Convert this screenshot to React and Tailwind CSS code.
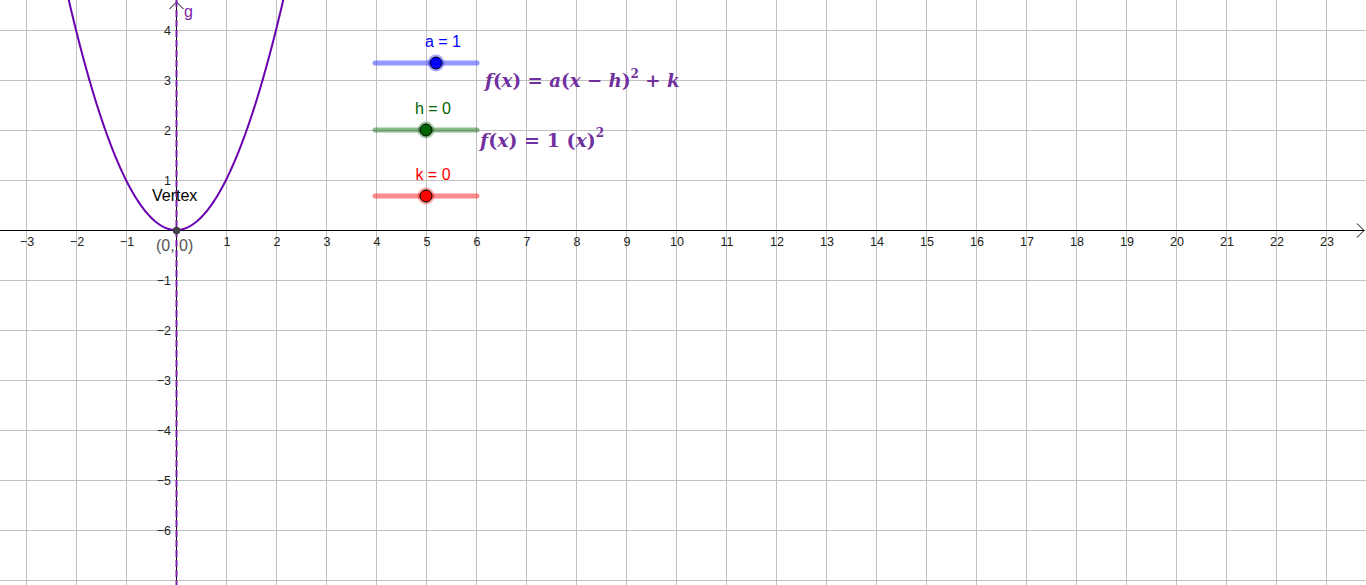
import React from 'react';

const W = 1366;
const H = 585;
const OX = 176;
const OY = 230;
const U = 50;

const px = (x) => OX + x * U;
const py = (y) => OY - y * U;

const parabola = () => {
  const pts = [];
  for (let x = -2.3; x <= 2.3; x += 0.02) {
    pts.push(`${px(x).toFixed(2)},${py(x * x).toFixed(2)}`);
  }
  return 'M' + pts.join(' L');
};

const minus = (n) => (n < 0 ? '\u2212' + Math.abs(n) : String(n));

const Slider = ({ y, pos, line, fill, halo, label, labelColor, labelX }) => (
  <g>
    <line x1={375} y1={y} x2={477} y2={y} stroke={line} strokeWidth={5} strokeLinecap="round" />
    <circle cx={pos} cy={y} r={8.5} fill={halo} />
    <circle cx={pos} cy={y} r={6} fill={fill} stroke="#000" strokeWidth={1} />
    <text x={labelX} y={y - 16} fill={labelColor} fontSize={16} textAnchor="middle">{label}</text>
  </g>
);

export default function App() {
  const xs = [];
  for (let n = -3; n <= 23; n++) xs.push(n);
  const ys = [];
  for (let n = 4; n >= -7; n--) ys.push(n);

  return (
    <div className="w-[1366px] h-[585px] bg-white overflow-hidden font-['Liberation_Sans',Arial,sans-serif]">
      <svg width={W} height={H} viewBox={`0 0 ${W} ${H}`} className="block">
        {/* grid */}
        {xs.map((n) => (
          <line key={'gx' + n} x1={px(n) + 0.5} y1={0} x2={px(n) + 0.5} y2={H} stroke="#c0c0c0" strokeWidth={1} />
        ))}
        {ys.map((n) => (
          <line key={'gy' + n} x1={0} y1={py(n) + 0.5} x2={W} y2={py(n) + 0.5} stroke="#c0c0c0" strokeWidth={1} />
        ))}

        {/* axes */}
        <line x1={0} y1={OY + 0.5} x2={1364} y2={OY + 0.5} stroke="#000" strokeWidth={1} />
        <path d={`M1357 ${OY - 6.5} L1364 ${OY + 0.5} L1357 ${OY + 7.5}`} fill="none" stroke="#000" strokeWidth={1} />
        <line x1={OX + 0.5} y1={2} x2={OX + 0.5} y2={H} stroke="#000" strokeWidth={1} />
        <path d={`M${OX - 6.5} 9 L${OX + 0.5} 2 L${OX + 7.5} 9`} fill="none" stroke="#000" strokeWidth={1} />

        {/* tick labels */}
        {xs.filter((n) => n !== 0).map((n) => (
          <text key={'lx' + n} x={px(n) + 1} y={OY + 16} fontSize={12.5} fill="#222" textAnchor="middle">{minus(n)}</text>
        ))}
        {ys.filter((n) => n !== 0 && n > -7).map((n) => (
          <text key={'ly' + n} x={OX - 5} y={py(n) + 5} fontSize={12.5} fill="#222" textAnchor="end">{minus(n)}</text>
        ))}

        {/* line g : x = 0 */}
        <line x1={OX + 0.5} y1={0} x2={OX + 0.5} y2={H} stroke="#7a1fa8" strokeWidth={2} strokeDasharray="7 3" />
        <text x={184} y={17} fontSize={16} fill="#7a1fa8">g</text>

        {/* parabola */}
        <path d={parabola()} fill="none" stroke="#6a00b0" strokeWidth={2} strokeLinejoin="round" />

        {/* vertex */}
        <circle cx={OX + 0.5} cy={OY + 0.5} r={3.5} fill="#444" stroke="#222" strokeWidth={0.5} />
        <text x={152} y={201} fontSize={16} fill="#000">Vertex</text>
        <text x={156} y={251} fontSize={16} fill="#555">(0, 0)</text>

        {/* sliders */}
        <Slider y={63} pos={436} line="rgba(64,64,255,0.55)" fill="#0000ff" halo="rgba(64,64,255,0.45)" label="a = 1" labelColor="#0000ff" labelX={443} />
        <Slider y={130} pos={426} line="rgba(0,100,0,0.45)" fill="#006400" halo="rgba(0,100,0,0.35)" label="h = 0" labelColor="#006400" labelX={433} />
        <Slider y={196} pos={426} line="rgba(255,0,0,0.45)" fill="#ff0000" halo="rgba(255,0,0,0.35)" label="k = 0" labelColor="#ff0000" labelX={433} />

        {/* formulas */}
        <text x={485} y={87} fontSize={18.3} fill="#7030a0" fontWeight="bold" className="font-['DejaVu_Serif','Liberation_Serif',serif]">
          <tspan fontStyle="italic">f</tspan>
          <tspan>(</tspan>
          <tspan fontStyle="italic">x</tspan>
          <tspan>) = </tspan>
          <tspan fontStyle="italic">a</tspan>
          <tspan>(</tspan>
          <tspan fontStyle="italic">x</tspan>
          <tspan> − </tspan>
          <tspan fontStyle="italic">h</tspan>
          <tspan>)</tspan>
          <tspan fontSize={12} dy={-9}>2</tspan>
          <tspan dy={9}> + </tspan>
          <tspan fontStyle="italic">k</tspan>
        </text>
        <text x={480} y={147} fontSize={19} fill="#7030a0" fontWeight="bold" className="font-['DejaVu_Serif','Liberation_Serif',serif]">
          <tspan fontStyle="italic">f</tspan>
          <tspan>(</tspan>
          <tspan fontStyle="italic">x</tspan>
          <tspan>) = 1  (</tspan>
          <tspan fontStyle="italic">x</tspan>
          <tspan>)</tspan>
          <tspan fontSize={12} dy={-10}>2</tspan>
        </text>
      </svg>
    </div>
  );
}
